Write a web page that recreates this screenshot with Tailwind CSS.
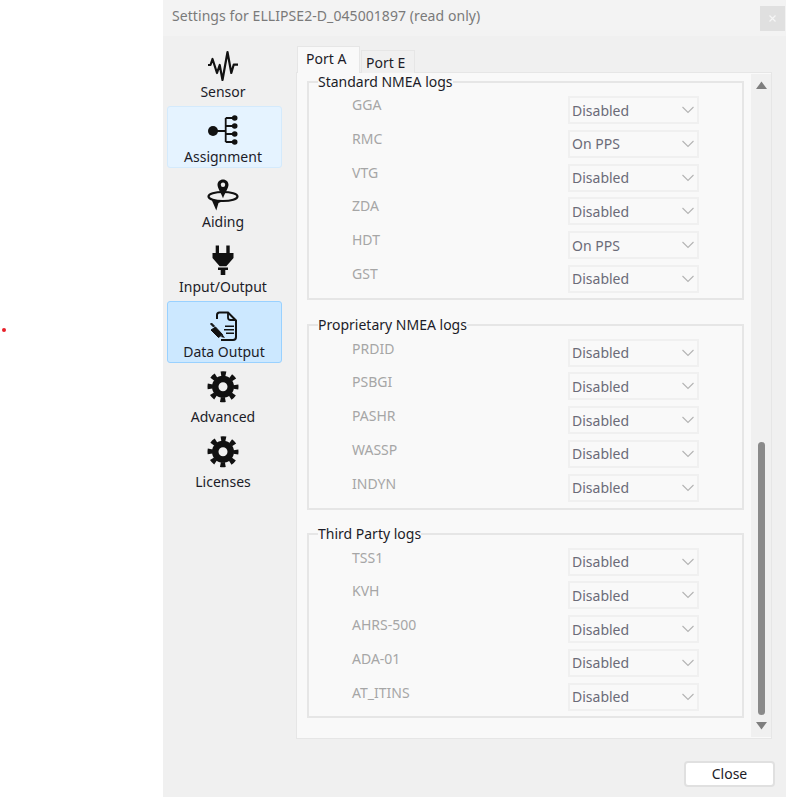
<!DOCTYPE html>
<html lang="en">

<head>
    <meta charset="UTF-8">
    <title>Settings</title>
    <script src="https://cdn.jsdelivr.net/npm/@tailwindcss/browser@4"></script>
</head>

<body class="bg-white font-['Noto_Sans',sans-serif] text-[14px] text-[#1c1c28] overflow-hidden">
    <!-- stray red dot left of the dialog -->
    <div class="absolute left-[2px] top-[328px] w-[4px] h-[4px] rounded-full bg-[#e8202a]"></div>

    <div class="ml-[163px] w-[623px] h-[797px] bg-[#f0f0f0] flex flex-col">
        <div class="h-[36px] bg-[#f3f3f3] flex items-start justify-between pl-[9px] pr-[1px]">
            <span class="mt-[5px] text-[14px] tracking-[0.07px] text-[#7a7a7a]">Settings for ELLIPSE2-D_045001897 (read only)</span>
            <div class="mt-[6px] w-[25px] h-[25px] bg-[#e0e0e0] flex items-center justify-center">
                <svg width="9" height="9" viewBox="0 0 9 9"><path d="M1.5 1.5l6 6M7.5 1.5l-6 6" stroke="#f6f6f6" stroke-width="1.2" /></svg>
            </div>
        </div>

        <div class="flex flex-1 min-h-0">
            <!-- sidebar -->
            <div class="w-[133px] pl-[4px] pt-[5px] flex flex-col gap-[3px]">
                <div class="w-[115px] h-[62px] pr-[3px] flex flex-col items-center">
                    <svg class="mt-[7px]" width="40" height="36" viewBox="0 0 40 36"><path d="M5 17h2.500L9.500 11 14 25l2.700-8 2.800 15 5-28 3.800 21 2.400-8.300H35" fill="none" stroke="#111" stroke-width="2.200" stroke-linejoin="round" /></svg>
                    <span class="-mt-[2px] leading-[20px]">Sensor</span>
                </div>
                <div class="w-[115px] h-[62px] pr-[3px] rounded-[3px] bg-[#e5f3ff] border border-[#d4eafc] flex flex-col items-center">
                    <svg class="mt-[6px]" width="40" height="36" viewBox="0 0 40 36">
                        <circle cx="10" cy="18" r="5" fill="#111" />
                        <path d="M10 18h12.700M22.700 5v24M22.700 5h9M22.700 13h9M22.700 21h9M22.700 29h9" fill="none" stroke="#111" stroke-width="1.800" />
                        <circle cx="31.700" cy="5" r="2.800" fill="#111" /><circle cx="31.700" cy="13" r="2.800" fill="#111" /><circle cx="31.700" cy="21" r="2.800" fill="#111" /><circle cx="31.700" cy="29" r="2.800" fill="#111" />
                    </svg>
                    <span class="-mt-[2px] leading-[20px]">Assignment</span>
                </div>
                <div class="w-[115px] h-[62px] pr-[3px] flex flex-col items-center">
                    <svg class="mt-[7px]" width="40" height="36" viewBox="0 0 40 36">
                        <ellipse cx="20" cy="18.500" rx="14.500" ry="4.500" fill="none" stroke="#111" stroke-width="2.200" />
                        <path d="M20 1.500c-3.200 0-5.500 2.400-5.500 5.300 0 3.500 3.500 8 5.500 13.500 2-5.500 5.500-10 5.500-13.500 0-2.900-2.300-5.300-5.500-5.300z" fill="#111" />
                        <circle cx="20" cy="6.800" r="2.200" fill="#f0f0f0" />
                        <path d="M8.500 21.500l11.500 1.500-4.500 2-2.200 7.500z" fill="#111" />
                    </svg>
                    <span class="-mt-[2px] leading-[20px]">Aiding</span>
                </div>
                <div class="w-[115px] h-[62px] pr-[3px] flex flex-col items-center">
                    <svg class="mt-[7px]" width="40" height="36" viewBox="0 0 40 36">
                        <path d="M12.700 2.500H16V10h-3.300zM23.300 2.500h3.400V10h-3.400zM9.500 10h21v5l-7.200 8.300h-6.600L9.500 15z" fill="#111" />
                        <path d="M15 24.500h10V27h-2.700v5h-4.600v-5H15z" fill="#111" />
                    </svg>
                    <span class="-mt-[2px] leading-[20px]">Input/Output</span>
                </div>
                <div class="w-[115px] h-[62px] pr-[1px] rounded-[3px] bg-[#cce8ff] border border-[#99d1ff] flex flex-col items-center">
                    <svg class="mt-[6px] -ml-[2px]" width="40" height="36" viewBox="0 0 40 36">
                        <path d="M14 11V7c0-1.500 1-2.500 2.500-2.500H25l8 8V29c0 1.800-1 3-3 3H18" fill="none" stroke="#111" stroke-width="2" />
                        <path d="M25 4.500v5c0 1.500 1 2.500 2.500 2.500H33" fill="none" stroke="#111" stroke-width="1.800" />
                        <path d="M22 18.300h9M21 21.800h10M23 25.300h8" stroke="#111" stroke-width="1.400" />
                        <path d="M7.500 16l1-1 3 3-1 1zM12.500 19l7 7.500-4 3-7.500-7.500z" fill="#111" stroke="#111" stroke-width="1" />
                        <path d="M19.500 26.500l2.500 3.500-4-1z" fill="#111" />
                    </svg>
                    <span class="-mt-[2px] leading-[20px]">Data Output</span>
                </div>
                <div class="w-[115px] h-[62px] pr-[3px] flex flex-col items-center">
                    <svg class="mt-[4px]" width="40" height="36" viewBox="0 0 40 36">
                        <circle cx="20" cy="16.700" r="7.750" fill="none" stroke="#111" stroke-width="6.500" />
                        <circle cx="20" cy="16.700" r="13" fill="none" stroke="#111" stroke-width="5" stroke-dasharray="5 5.210" stroke-dashoffset="2.500" />
                    </svg>
                    <span class="mt-[1px] leading-[20px]">Advanced</span>
                </div>
                <div class="w-[115px] h-[62px] pr-[3px] flex flex-col items-center">
                    <svg class="mt-[4px]" width="40" height="36" viewBox="0 0 40 36">
                        <circle cx="20" cy="16.700" r="7.750" fill="none" stroke="#111" stroke-width="6.500" />
                        <circle cx="20" cy="16.700" r="13" fill="none" stroke="#111" stroke-width="5" stroke-dasharray="5 5.210" stroke-dashoffset="2.500" />
                    </svg>
                    <span class="mt-[1px] leading-[20px]">Licenses</span>
                </div>
            </div>

            <!-- tabs and pane -->
            <div class="w-[476px] flex flex-col pt-[10px]">
                <div class="flex items-end h-[27px] pl-[1px] -mb-[1px] z-10">
                    <div class="w-[63px] h-[27px] bg-[#f9f9f9] border border-b-0 border-[#e6e6e6] pl-[8px] leading-[24px]">Port A</div>
                    <div class="ml-[1px] w-[54px] h-[23px] bg-[#f0f0f0] border border-b-0 border-[#e6e6e6] pl-[4px] leading-[23px]">Port E</div>
                </div>
                <div class="h-[667px] bg-[#f9f9f9] border border-[#e6e6e6] flex">
                    <div class="w-[447px] pl-[10px] pt-[2px] flex flex-col">
                        <fieldset class="w-[437px] h-[225px] border-2 border-[#e6e6e6] pl-[9px] pt-[8px] m-0">
                            <legend class="px-0 -mb-[1px] leading-[14px] h-[14px] overflow-visible">Standard NMEA logs</legend>
                            <div class="flex items-start h-[33.75px] pl-[34px]"><span class="w-[216px] text-[#a6a6a6] leading-[20px] -mt-[1px]">GGA</span><div class="w-[131px] h-[28px] bg-[#f9f9f9] border-2 border-[#f0f0f0] flex items-center justify-between pl-[2px] pr-[2px] text-[#6b6b78]"><span>Disabled</span><svg width="14" height="8" viewBox="0 0 14 8"><path d="M1.500 1l5.500 5.500L12.500 1" fill="none" stroke="#b4b4b4" stroke-width="1.100" /></svg></div></div>
                            <div class="flex items-start h-[33.75px] pl-[34px]"><span class="w-[216px] text-[#a6a6a6] leading-[20px] -mt-[1px]">RMC</span><div class="w-[131px] h-[28px] bg-[#f9f9f9] border-2 border-[#f0f0f0] flex items-center justify-between pl-[2px] pr-[2px] text-[#6b6b78]"><span>On PPS</span><svg width="14" height="8" viewBox="0 0 14 8"><path d="M1.500 1l5.500 5.500L12.500 1" fill="none" stroke="#b4b4b4" stroke-width="1.100" /></svg></div></div>
                            <div class="flex items-start h-[33.75px] pl-[34px]"><span class="w-[216px] text-[#a6a6a6] leading-[20px] -mt-[1px]">VTG</span><div class="w-[131px] h-[28px] bg-[#f9f9f9] border-2 border-[#f0f0f0] flex items-center justify-between pl-[2px] pr-[2px] text-[#6b6b78]"><span>Disabled</span><svg width="14" height="8" viewBox="0 0 14 8"><path d="M1.500 1l5.500 5.500L12.500 1" fill="none" stroke="#b4b4b4" stroke-width="1.100" /></svg></div></div>
                            <div class="flex items-start h-[33.75px] pl-[34px]"><span class="w-[216px] text-[#a6a6a6] leading-[20px] -mt-[1px]">ZDA</span><div class="w-[131px] h-[28px] bg-[#f9f9f9] border-2 border-[#f0f0f0] flex items-center justify-between pl-[2px] pr-[2px] text-[#6b6b78]"><span>Disabled</span><svg width="14" height="8" viewBox="0 0 14 8"><path d="M1.500 1l5.500 5.500L12.500 1" fill="none" stroke="#b4b4b4" stroke-width="1.100" /></svg></div></div>
                            <div class="flex items-start h-[33.75px] pl-[34px]"><span class="w-[216px] text-[#a6a6a6] leading-[20px] -mt-[1px]">HDT</span><div class="w-[131px] h-[28px] bg-[#f9f9f9] border-2 border-[#f0f0f0] flex items-center justify-between pl-[2px] pr-[2px] text-[#6b6b78]"><span>On PPS</span><svg width="14" height="8" viewBox="0 0 14 8"><path d="M1.500 1l5.500 5.500L12.500 1" fill="none" stroke="#b4b4b4" stroke-width="1.100" /></svg></div></div>
                            <div class="flex items-start h-[33.75px] pl-[34px]"><span class="w-[216px] text-[#a6a6a6] leading-[20px] -mt-[1px]">GST</span><div class="w-[131px] h-[28px] bg-[#f9f9f9] border-2 border-[#f0f0f0] flex items-center justify-between pl-[2px] pr-[2px] text-[#6b6b78]"><span>Disabled</span><svg width="14" height="8" viewBox="0 0 14 8"><path d="M1.500 1l5.500 5.500L12.500 1" fill="none" stroke="#b4b4b4" stroke-width="1.100" /></svg></div></div>
                        </fieldset>
                        <fieldset class="mt-[18px] w-[437px] h-[192px] border-2 border-[#e6e6e6] pl-[9px] pt-[7.5px] m-0">
                            <legend class="px-0 -mb-[1px] leading-[14px] h-[14px]">Proprietary NMEA logs</legend>
                            <div class="flex items-start h-[33.75px] pl-[34px]"><span class="w-[216px] text-[#a6a6a6] leading-[20px]">PRDID</span><div class="w-[131px] h-[28px] bg-[#f9f9f9] border-2 border-[#f0f0f0] flex items-center justify-between pl-[2px] pr-[2px] text-[#6b6b78]"><span>Disabled</span><svg width="14" height="8" viewBox="0 0 14 8"><path d="M1.500 1l5.500 5.500L12.500 1" fill="none" stroke="#b4b4b4" stroke-width="1.100" /></svg></div></div>
                            <div class="flex items-start h-[33.75px] pl-[34px]"><span class="w-[216px] text-[#a6a6a6] leading-[20px]">PSBGI</span><div class="w-[131px] h-[28px] bg-[#f9f9f9] border-2 border-[#f0f0f0] flex items-center justify-between pl-[2px] pr-[2px] text-[#6b6b78]"><span>Disabled</span><svg width="14" height="8" viewBox="0 0 14 8"><path d="M1.500 1l5.500 5.500L12.500 1" fill="none" stroke="#b4b4b4" stroke-width="1.100" /></svg></div></div>
                            <div class="flex items-start h-[33.75px] pl-[34px]"><span class="w-[216px] text-[#a6a6a6] leading-[20px]">PASHR</span><div class="w-[131px] h-[28px] bg-[#f9f9f9] border-2 border-[#f0f0f0] flex items-center justify-between pl-[2px] pr-[2px] text-[#6b6b78]"><span>Disabled</span><svg width="14" height="8" viewBox="0 0 14 8"><path d="M1.500 1l5.500 5.500L12.500 1" fill="none" stroke="#b4b4b4" stroke-width="1.100" /></svg></div></div>
                            <div class="flex items-start h-[33.75px] pl-[34px]"><span class="w-[216px] text-[#a6a6a6] leading-[20px]">WASSP</span><div class="w-[131px] h-[28px] bg-[#f9f9f9] border-2 border-[#f0f0f0] flex items-center justify-between pl-[2px] pr-[2px] text-[#6b6b78]"><span>Disabled</span><svg width="14" height="8" viewBox="0 0 14 8"><path d="M1.500 1l5.500 5.500L12.500 1" fill="none" stroke="#b4b4b4" stroke-width="1.100" /></svg></div></div>
                            <div class="flex items-start h-[33.75px] pl-[34px]"><span class="w-[216px] text-[#a6a6a6] leading-[20px]">INDYN</span><div class="w-[131px] h-[28px] bg-[#f9f9f9] border-2 border-[#f0f0f0] flex items-center justify-between pl-[2px] pr-[2px] text-[#6b6b78]"><span>Disabled</span><svg width="14" height="8" viewBox="0 0 14 8"><path d="M1.500 1l5.500 5.500L12.500 1" fill="none" stroke="#b4b4b4" stroke-width="1.100" /></svg></div></div>
                        </fieldset>
                        <fieldset class="mt-[17px] w-[437px] h-[191px] border-2 border-[#e6e6e6] pl-[9px] pt-[7.5px] m-0">
                            <legend class="px-0 -mb-[1px] leading-[14px] h-[14px]">Third Party logs</legend>
                            <div class="flex items-start h-[33.75px] pl-[34px]"><span class="w-[216px] text-[#a6a6a6] leading-[20px]">TSS1</span><div class="w-[131px] h-[28px] bg-[#f9f9f9] border-2 border-[#f0f0f0] flex items-center justify-between pl-[2px] pr-[2px] text-[#6b6b78]"><span>Disabled</span><svg width="14" height="8" viewBox="0 0 14 8"><path d="M1.500 1l5.500 5.500L12.500 1" fill="none" stroke="#b4b4b4" stroke-width="1.100" /></svg></div></div>
                            <div class="flex items-start h-[33.75px] pl-[34px]"><span class="w-[216px] text-[#a6a6a6] leading-[20px]">KVH</span><div class="w-[131px] h-[28px] bg-[#f9f9f9] border-2 border-[#f0f0f0] flex items-center justify-between pl-[2px] pr-[2px] text-[#6b6b78]"><span>Disabled</span><svg width="14" height="8" viewBox="0 0 14 8"><path d="M1.500 1l5.500 5.500L12.500 1" fill="none" stroke="#b4b4b4" stroke-width="1.100" /></svg></div></div>
                            <div class="flex items-start h-[33.75px] pl-[34px]"><span class="w-[216px] text-[#a6a6a6] leading-[20px]">AHRS-500</span><div class="w-[131px] h-[28px] bg-[#f9f9f9] border-2 border-[#f0f0f0] flex items-center justify-between pl-[2px] pr-[2px] text-[#6b6b78]"><span>Disabled</span><svg width="14" height="8" viewBox="0 0 14 8"><path d="M1.500 1l5.500 5.500L12.500 1" fill="none" stroke="#b4b4b4" stroke-width="1.100" /></svg></div></div>
                            <div class="flex items-start h-[33.75px] pl-[34px]"><span class="w-[216px] text-[#a6a6a6] leading-[20px]">ADA-01</span><div class="w-[131px] h-[28px] bg-[#f9f9f9] border-2 border-[#f0f0f0] flex items-center justify-between pl-[2px] pr-[2px] text-[#6b6b78]"><span>Disabled</span><svg width="14" height="8" viewBox="0 0 14 8"><path d="M1.500 1l5.500 5.500L12.500 1" fill="none" stroke="#b4b4b4" stroke-width="1.100" /></svg></div></div>
                            <div class="flex items-start h-[33.75px] pl-[34px]"><span class="w-[216px] text-[#a6a6a6] leading-[20px]">AT_ITINS</span><div class="w-[131px] h-[28px] bg-[#f9f9f9] border-2 border-[#f0f0f0] flex items-center justify-between pl-[2px] pr-[2px] text-[#6b6b78]"><span>Disabled</span><svg width="14" height="8" viewBox="0 0 14 8"><path d="M1.500 1l5.500 5.500L12.500 1" fill="none" stroke="#b4b4b4" stroke-width="1.100" /></svg></div></div>
                        </fieldset>
                    </div>
                    <!-- scrollbar -->
                    <div class="ml-[7px] w-[20px] my-[1px] bg-[#f0f0f0] flex flex-col items-center">
                        <svg class="mt-[7px]" width="11" height="8" viewBox="0 0 11 8"><path d="M5.500 0.500L11 8H0z" fill="#7e7e7e" /></svg>
                        <div class="mt-[353px] w-[7px] h-[273px] rounded-full bg-[#8a8a8a]"></div>
                        <svg class="mt-[7px]" width="11" height="8" viewBox="0 0 11 8"><path d="M0 0h11L5.500 7.500z" fill="#7e7e7e" /></svg>
                    </div>
                </div>
                <div class="flex justify-end -mr-[3px] mt-[22px]">
                    <button class="w-[91px] h-[26px] rounded-[4px] bg-white border-2 border-[#e0e0e0] leading-[20px]">Close</button>
                </div>
            </div>
        </div>
    </div>
</body>

</html>
